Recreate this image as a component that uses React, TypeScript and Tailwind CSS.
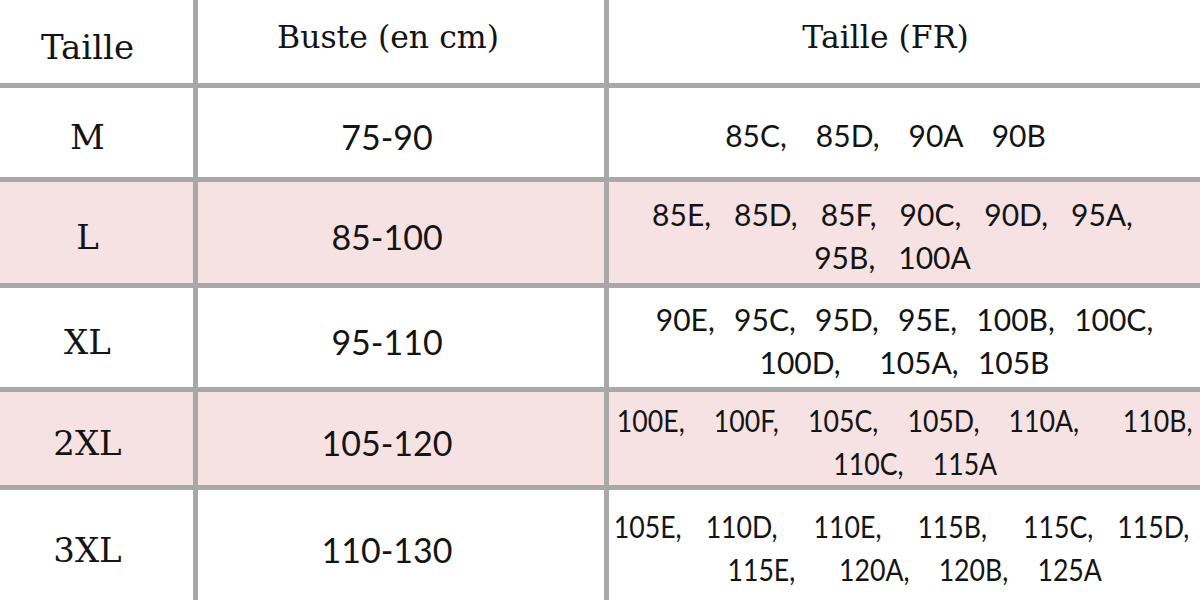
import React from 'react';

type Line = { t: string; c?: string };

type Row = {
  size: string;
  bust: string;
  fr: Line[];
  pink: boolean;
  height: string;
  frClass: string;
  shift: string;
};

const rows: Row[] = [
  {
    size: 'M',
    bust: '75-90',
    fr: [{ t: '85C,   85D,   90A   90B' }],
    pink: false,
    height: 'h-[94px]',
    frClass: 'text-[30px] [word-spacing:2px]',
    shift: 'pr-[38px]',
  },
  {
    size: 'L',
    bust: '85-100',
    fr: [{ t: '85E,   85D,   85F,   90C,   90D,   95A,' }, { t: '95B,   100A' }],
    pink: true,
    height: 'h-[106px]',
    frClass: 'text-[30px]',
    shift: 'pr-[24px]',
  },
  {
    size: 'XL',
    bust: '95-110',
    fr: [{ t: '90E,  95C,  95D,  95E,  100B,  100C,' }, { t: '100D,    105A,  105B' }],
    pink: false,
    height: 'h-[104px]',
    frClass: 'text-[30px] [word-spacing:2px]',
    shift: 'pr-0',
  },
  {
    size: '2XL',
    bust: '105-120',
    fr: [
      { t: '100E,  100F,  105C,  105D,  110A,   110B,' },
      { t: '110C,  115A', c: 'translate-x-[11px]' },
    ],
    pink: true,
    height: 'h-[98px]',
    frClass: 'text-[31px] scale-x-[0.86] [word-spacing:9px]',
    shift: 'pr-0',
  },
  {
    size: '3XL',
    bust: '110-130',
    fr: [
      { t: '105E,  110D,   110E,   115B,   115C,  115D,' },
      { t: '115E,   120A,  120B,  125A', c: 'translate-x-[13px] [word-spacing:9px]' },
    ],
    pink: false,
    height: 'h-[110px]',
    frClass: 'text-[31px] scale-x-[0.86] [word-spacing:6px]',
    shift: 'pr-[6px]',
  },
];

const serif = "font-['DejaVu_Serif',serif]";
const sans = "font-['Lato',sans-serif]";

export default function App() {
  return (
    <div className="w-[1200px] h-[600px] overflow-hidden bg-white text-[#141414]">
      {/* header */}
      <div className="flex h-[88px] border-b-[5px] border-[#a8a8a8]">
        <div className={`w-[198px] shrink-0 border-r-[5px] border-[#a8a8a8] flex items-center justify-center pt-[12px] pr-[18px] text-[34px] ${serif}`}>
          Taille
        </div>
        <div className={`w-[411px] shrink-0 border-r-[5px] border-[#a8a8a8] flex items-center justify-center pb-[8px] pr-[26px] text-[31.5px] ${serif}`}>
          Buste (en cm)
        </div>
        <div className={`flex-1 min-w-0 flex items-center justify-center pb-[8px] pr-[38px] text-[31.5px] ${serif}`}>
          Taille (FR)
        </div>
      </div>

      {rows.map((r, i) => (
        <div
          key={r.size}
          className={`flex ${r.height} ${i < rows.length - 1 ? 'border-b-[5px]' : ''} border-[#a8a8a8] ${r.pink ? 'bg-[#f6e2e2]' : 'bg-white'}`}
        >
          <div className={`w-[198px] shrink-0 border-r-[5px] border-[#a8a8a8] flex items-center justify-center pt-[10px] pr-[18px] text-[34px] ${serif}`}>
            {r.size}
          </div>
          <div className={`w-[411px] shrink-0 border-r-[5px] border-[#a8a8a8] flex items-center justify-center pt-[8px] pr-[28px] text-[34px] ${sans}`}>
            {r.bust}
          </div>
          <div className={`flex-1 min-w-0 flex flex-col items-center justify-center pt-[6px] ${r.shift} ${sans}`}>
            {r.fr.map((line) => (
              <div key={line.t} className={`whitespace-pre leading-[43px] ${r.frClass} ${line.c ?? ''}`}>
                {line.t}
              </div>
            ))}
          </div>
        </div>
      ))}
    </div>
  );
}
